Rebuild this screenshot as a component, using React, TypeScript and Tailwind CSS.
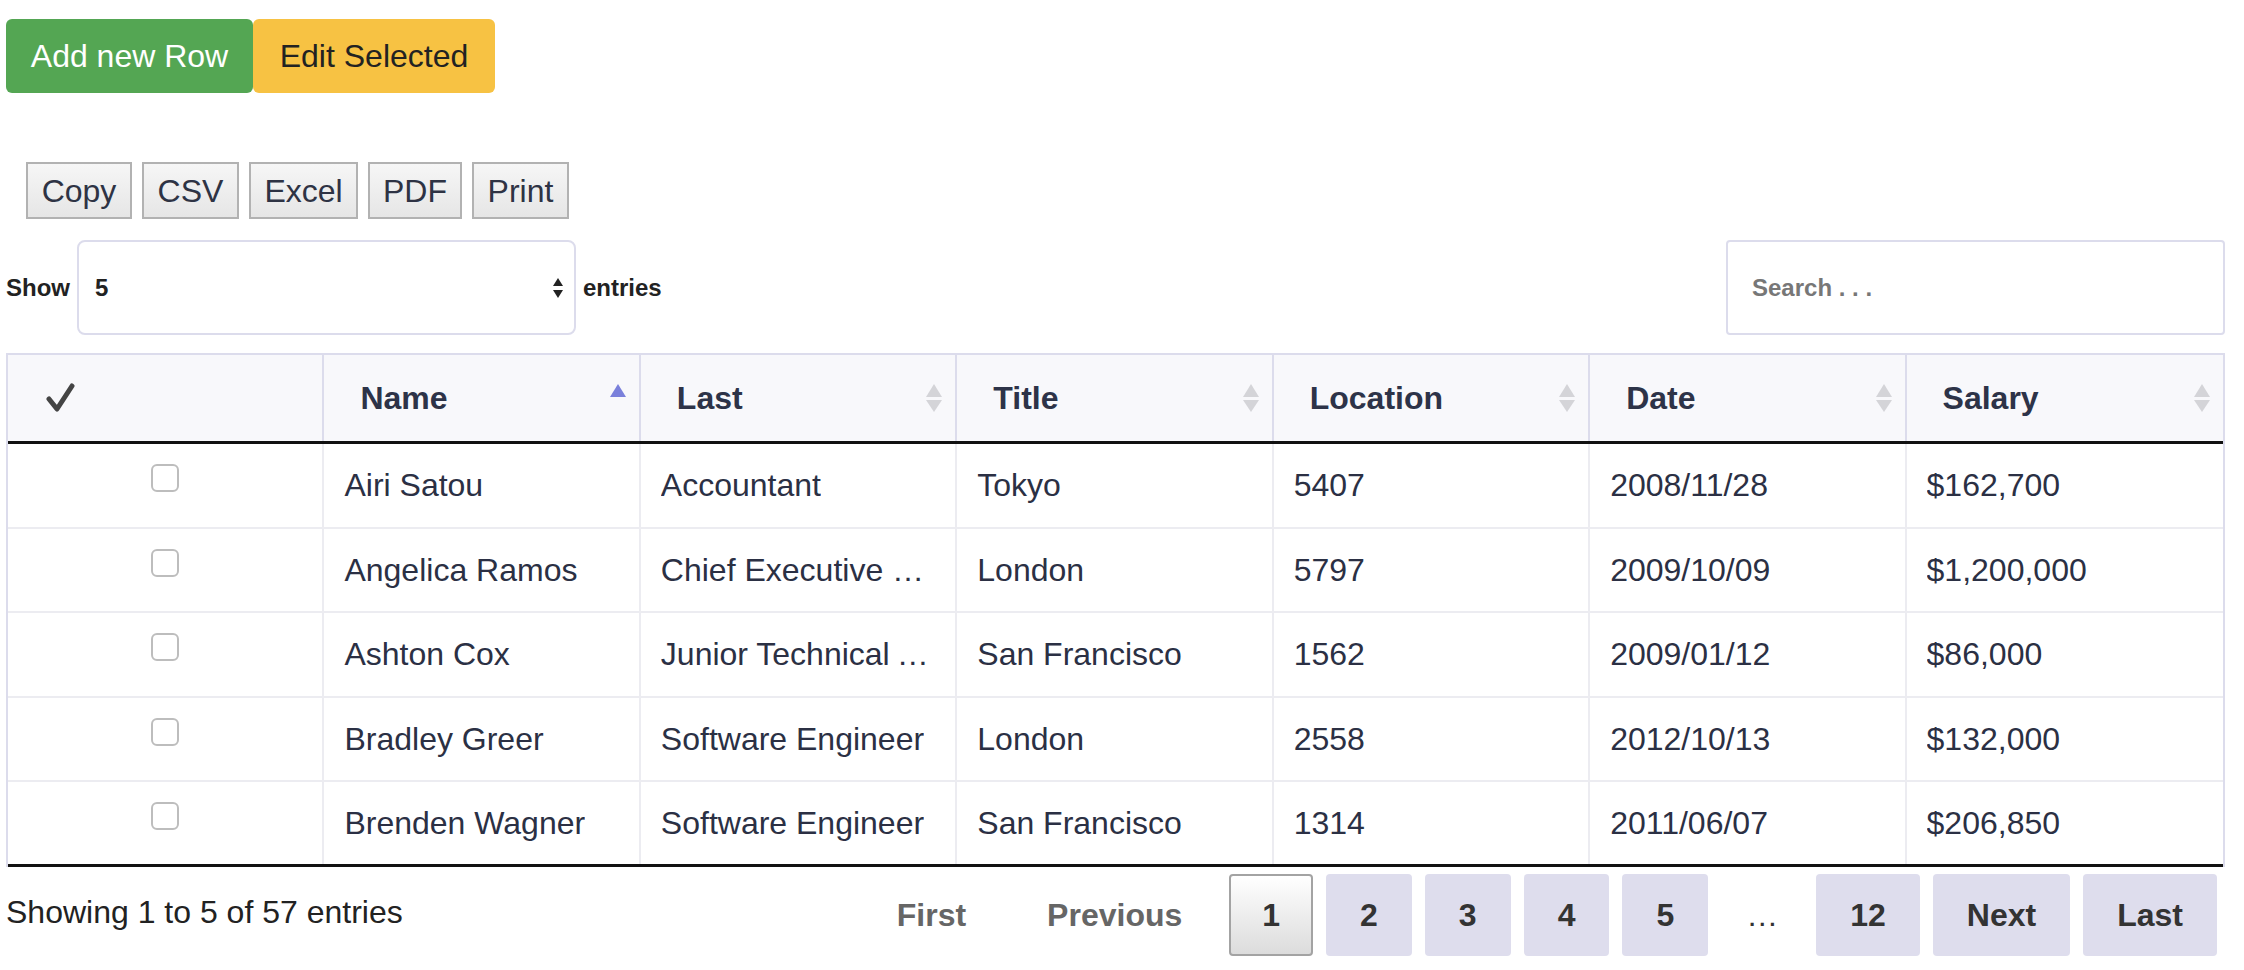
import React from 'react';

type Row = {
  name: string;
  title: string;
  location: string;
  ext: string;
  date: string;
  salary: string;
};

const ROWS: Row[] = [
  { name: 'Airi Satou', title: 'Accountant', location: 'Tokyo', ext: '5407', date: '2008/11/28', salary: '$162,700' },
  {
    name: 'Angelica Ramos',
    title: 'Chief Executive Officer (CEO)',
    location: 'London',
    ext: '5797',
    date: '2009/10/09',
    salary: '$1,200,000',
  },
  {
    name: 'Ashton Cox',
    title: 'Junior Technical Author',
    location: 'San Francisco',
    ext: '1562',
    date: '2009/01/12',
    salary: '$86,000',
  },
  {
    name: 'Bradley Greer',
    title: 'Software Engineer',
    location: 'London',
    ext: '2558',
    date: '2012/10/13',
    salary: '$132,000',
  },
  {
    name: 'Brenden Wagner',
    title: 'Software Engineer',
    location: 'San Francisco',
    ext: '1314',
    date: '2011/06/07',
    salary: '$206,850',
  },
];

const COLUMNS = [
  { label: 'Name', sort: 'asc' as const },
  { label: 'Last', sort: 'none' as const },
  { label: 'Title', sort: 'none' as const },
  { label: 'Location', sort: 'none' as const },
  { label: 'Date', sort: 'none' as const },
  { label: 'Salary', sort: 'none' as const },
];

function SortIcon({ sort }: { sort: 'asc' | 'none' }) {
  const up = sort === 'asc' ? '#7a80db' : '#d4d4d8';
  const down = sort === 'asc' ? 'transparent' : '#d4d4d8';
  return (
    <svg width="18" height="30" viewBox="0 0 18 30" className="shrink-0">
      <polygon points="9,1 17,14 1,14" fill={up} />
      <polygon points="1,17 17,17 9,29" fill={down} />
    </svg>
  );
}

function CheckMark() {
  return (
    <svg width="30" height="30" viewBox="0 0 30 30">
      <path d="M4 16 L12 26 L27 3" fill="none" stroke="#444" strokeWidth="5" strokeLinecap="round" strokeLinejoin="round" />
    </svg>
  );
}

function SelectArrows() {
  return (
    <svg width="12" height="22" viewBox="0 0 12 22">
      <polygon points="6,1 11,9 1,9" fill="#222" />
      <polygon points="1,13 11,13 6,21" fill="#222" />
    </svg>
  );
}

function ExportButton({ label, width }: { label: string; width: string }) {
  return (
    <button
      className={`${width} flex h-[57px] items-center justify-center border-2 border-[#b2b2b2] bg-gradient-to-b from-[#f6f6f6] to-[#e6e6e6] text-[32px] text-[#2e3344]`}
    >
      {label}
    </button>
  );
}

function PageButton({ label, active, muted }: { label: string; active?: boolean; muted?: boolean }) {
  if (active) {
    return (
      <button className="flex h-[82px] items-center rounded-[4px] border-2 border-[#a3a3a3] bg-gradient-to-b from-white to-[#dcdcdc] px-[31px] text-[32px] font-bold text-[#333]">
        {label}
      </button>
    );
  }
  if (muted) {
    return (
      <button className="flex h-[82px] items-center px-[34px] text-[32px] font-bold text-[#666]">{label}</button>
    );
  }
  return (
    <button className="flex h-[82px] items-center rounded-[4px] bg-[#dedded] px-[34px] text-[32px] font-bold text-[#333]">
      {label}
    </button>
  );
}

export default function App() {
  return (
    <div
      className="min-h-[970px] w-[2244px] bg-white pl-[6px] text-[#2b3044]"
      style={{ fontFamily: '"Liberation Sans", Arial, sans-serif' }}
    >
      <div className="w-[2219px]">
        {/* Actions */}
        <div className="flex pt-[19px]">
          <button className="flex h-[74px] w-[247px] items-center justify-center rounded-[6px] bg-[#54a653] text-[32px] text-white">
            Add new Row
          </button>
          <button className="flex h-[74px] w-[242px] items-center justify-center rounded-[6px] bg-[#f7c243] text-[32px] text-[#222]">
            Edit Selected
          </button>
        </div>

        {/* Export buttons */}
        <div className="mt-[69px] flex gap-[10px] pl-[20px]">
          <ExportButton label="Copy" width="w-[106px]" />
          <ExportButton label="CSV" width="w-[97px]" />
          <ExportButton label="Excel" width="w-[109px]" />
          <ExportButton label="PDF" width="w-[94px]" />
          <ExportButton label="Print" width="w-[97px]" />
        </div>

        {/* Length + search */}
        <div className="mt-[21px] flex items-center justify-between">
          <div className="flex items-center gap-[7px] text-[24px] font-bold text-[#222]">
            <span>Show</span>
            <div className="flex h-[95px] w-[499px] items-center justify-between rounded-[8px] border-2 border-[#dcdcec] pr-[10px] pl-[16px]">
              <span>5</span>
              <SelectArrows />
            </div>
            <span>entries</span>
          </div>
          <div className="flex h-[95px] w-[499px] items-center rounded-[4px] border-2 border-[#dcdcec] pl-[24px] text-[24px] font-bold text-[#777]">
            Search . . .
          </div>
        </div>

        {/* Table */}
        <div className="mt-[18px] border-x-2 border-t-2 border-[#dcdcec]">
          <div className="grid h-[89px] grid-cols-7 border-b-[3px] border-[#111] bg-[#f8f8fb] text-[32px] font-bold text-[#2d3348]">
            <div className="flex items-center border-r-2 border-[#dcdcec] pl-[37px]">
              <CheckMark />
            </div>
            {COLUMNS.map((col, i) => (
              <div
                key={col.label}
                className={`flex items-center justify-between pr-[12px] pl-[36px] ${i < COLUMNS.length - 1 ? 'border-r-2 border-[#dcdcec]' : ''}`}
              >
                <span>{col.label}</span>
                <SortIcon sort={col.sort} />
              </div>
            ))}
          </div>

          {ROWS.map((row, i) => {
            const cells = [row.name, row.title, row.location, row.ext, row.date, row.salary];
            return (
              <div
                key={row.name}
                className={`grid h-[84.5px] grid-cols-7 text-[32px] ${i === ROWS.length - 1 ? 'border-b-[3px] border-[#111]' : 'border-b-2 border-[#ececf1]'}`}
              >
                <div className="flex justify-center border-r-2 border-[#ececf1] pt-[20px]">
                  <div className="h-[28px] w-[28px] rounded-[6px] border-2 border-[#bdbdbd] bg-white" />
                </div>
                {cells.map((c, j) => (
                  <div
                    key={j}
                    className={`flex min-w-0 items-center pr-[20px] pl-[20px] ${j < cells.length - 1 ? 'border-r-2 border-[#ececf1]' : ''}`}
                  >
                    <span className="truncate">{c}</span>
                  </div>
                ))}
              </div>
            );
          })}
        </div>

        {/* Footer */}
        <div className="mt-[7px] flex items-center justify-between">
          <div className="-mt-[6px] text-[32px] text-[#222]">Showing 1 to 5 of 57 entries</div>
          <div className="mr-[8px] flex items-center gap-[13px]">
            <PageButton label="First" muted />
            <PageButton label="Previous" muted />
            <PageButton label="1" active />
            <PageButton label="2" />
            <PageButton label="3" />
            <PageButton label="4" />
            <PageButton label="5" />
            <span className="flex h-[82px] w-[82px] items-center justify-center text-[32px] text-[#333]">…</span>
            <PageButton label="12" />
            <PageButton label="Next" />
            <PageButton label="Last" />
          </div>
        </div>
      </div>
    </div>
  );
}
